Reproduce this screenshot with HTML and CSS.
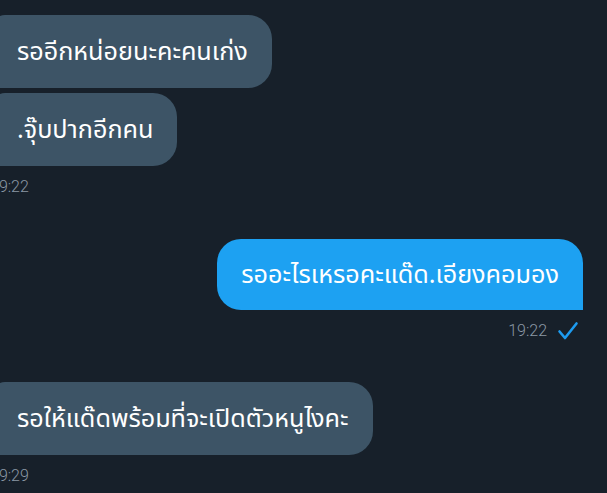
FILE: index.html
```html
<!DOCTYPE html>
<html lang="th">
<head>
<meta charset="utf-8">
<link rel="stylesheet" href="styles.css">
</head>
<body>
<div class="chat">
  <div class="group in first">
    <div class="bubble in">รออีกหน่อยนะคะคนเก่ง</div>
    <div class="bubble in">.จุ๊บปากอีกคน</div>
    <div class="time">19:22</div>
  </div>
  <div class="group out">
    <div class="bubble out">รออะไรเหรอคะแด๊ด.เอียงคอมอง</div>
    <div class="meta">
      <span class="time">19:22</span>
      <svg class="check" width="22" height="20" viewBox="0 0 22 20"><path d="M2.5 10.5 L8 17 L19.5 2.5" fill="none" stroke="#1d9bf0" stroke-width="2.6" stroke-linecap="round" stroke-linejoin="round"/></svg>
    </div>
  </div>
  <div class="group in">
    <div class="bubble in">รอให้แด๊ดพร้อมที่จะเปิดตัวหนูไงคะ</div>
    <div class="time">19:29</div>
  </div>
</div>
</body>
</html>
```
FILE: styles.css
```css
html, body {
  margin: 0;
  padding: 0;
  background: #17202a;
  overflow: hidden;
}
.chat {
  width: 607px;
  height: 493px;
  display: flex;
  flex-direction: column;
  font-family: "Noto Sans", "Noto Sans Thai", sans-serif;
}
.group {
  display: flex;
  flex-direction: column;
  gap: 5px;
}
.group.in { align-items: flex-start; margin-left: -7px; }
.group.out { align-items: flex-end; margin-right: 24px; margin-top: 42px; }
.group.first { margin-top: 15px; }
.group.in:not(.first) { margin-top: 41px; }
.bubble {
  height: 73px;
  box-sizing: border-box;
  display: flex;
  align-items: center;
  padding: 0 24px;
  font-size: 25.2px;
  color: #ffffff;
  white-space: nowrap;
}
.bubble.in {
  background: #3d5466;
  border-radius: 12px 24px 24px 0;
}
.bubble.out {
  background: #1da1f2;
  border-radius: 24px 24px 0 24px;
  height: 71px;
}
.time {
  font-family: Roboto, sans-serif;
  font-weight: 300;
  font-size: 16px;
  color: #8b98a5;
  line-height: 20px;
  margin-top: 6px;
}
.group.in .time { margin-left: -3px; }
.meta {
  display: flex;
  align-items: center;
  gap: 10px;
  margin-top: 6px;
  margin-right: 4px;
}
.meta .time { margin-top: 0; margin-left: 0; }
.check { display: block; }
```
